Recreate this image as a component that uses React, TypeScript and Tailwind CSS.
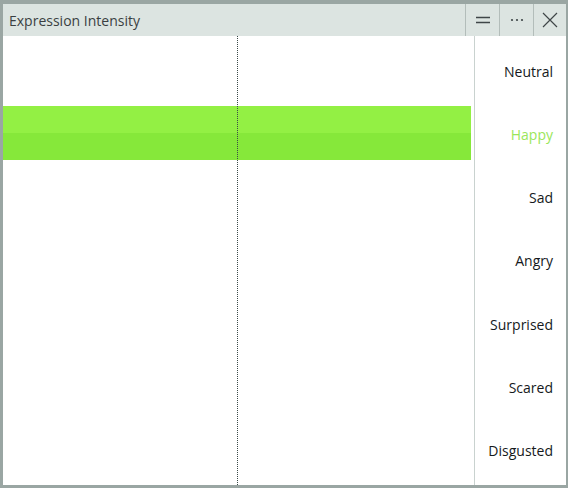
const emotions = ["Neutral", "Happy", "Sad", "Angry", "Surprised", "Scared", "Disgusted"] as const;

export default function App() {
  return (
    <div
      className="flex h-[488px] w-[568px] flex-col border-t-[4px] border-r-[2px] border-b-[3px] border-l-[3px] border-[#9aa6a3] bg-white"
      style={{ fontFamily: "'Open Sans', 'Noto Sans', sans-serif" }}
    >
      <div className="flex h-[32px] shrink-0 items-center bg-[#dce4e1]">
        <span className="flex-1 pl-[6px] text-[14px] text-[#3a3f42]">Expression Intensity</span>
        <div className="flex h-full">
          <button className="flex h-full w-[34px] items-center justify-center border-l border-[#b3bdba]">
            <svg width="16" height="10" viewBox="0 0 16 10">
              <path d="M1 2.5h14M1 7.5h14" stroke="#3f4648" strokeWidth="1.3" />
            </svg>
          </button>
          <button className="flex h-full w-[34px] items-center justify-center border-l border-[#b3bdba]">
            <svg width="16" height="4" viewBox="0 0 16 4">
              <circle cx="3" cy="2" r="1.1" fill="#3f4648" />
              <circle cx="8" cy="2" r="1.1" fill="#3f4648" />
              <circle cx="13" cy="2" r="1.1" fill="#3f4648" />
            </svg>
          </button>
          <button className="flex h-full w-[33px] items-center justify-center border-l border-[#b3bdba]">
            <svg width="16" height="16" viewBox="0 0 16 16">
              <path d="M1 1l14 14M15 1L1 15" stroke="#3f4648" strokeWidth="1.2" />
            </svg>
          </button>
        </div>
      </div>

      <div className="flex flex-1">
        <div className="relative flex-1">
          <div className="absolute top-0 bottom-0 left-[234px] border-l border-dotted border-[#3a4a48]" />
          <div className="flex h-full flex-col">
            {emotions.map((name) => (
              <div key={name} className="flex flex-1 items-center">
                {name === "Happy" && (
                  <div className="mt-[2px] mr-[3px] flex h-[54px] flex-1 flex-col">
                    <div className="flex-1 bg-[#93f044]" />
                    <div className="flex-1 bg-[#86e83a]" />
                  </div>
                )}
              </div>
            ))}
          </div>
        </div>
        <div className="flex w-[92px] flex-col border-l border-[#c9d2cf] pt-[4px] pb-[3px]">
          {emotions.map((name) => (
            <div
              key={name}
              className={`flex flex-1 items-center justify-end pr-[13px] text-[14px] ${
                name === "Happy" ? "text-[#9ae65a]" : "text-[#15191c]"
              }`}
            >
              {name}
            </div>
          ))}
        </div>
      </div>
    </div>
  );
}
